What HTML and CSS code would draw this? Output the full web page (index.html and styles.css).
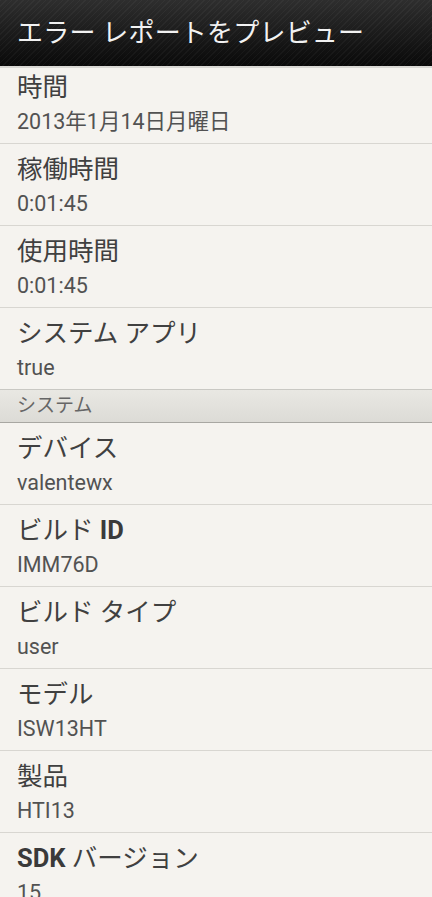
FILE: index.html
```html
<!DOCTYPE html>
<html lang="ja">
<head>
  <meta charset="UTF-8" />
  <meta name="viewport" content="width=device-width, initial-scale=1.0" />
  <title>エラー レポートをプレビュー</title>
  <link rel="stylesheet" href="styles.css">
</head>
<body>
  <div class="action-bar">
    <h1>エラー レポートをプレビュー</h1>
  </div>
  <div class="report-list">
    <div class="report-item first">
      <div class="item-title">時間</div>
      <div class="item-value">2013年1月14日月曜日</div>
    </div>
    <div class="report-item">
      <div class="item-title">稼働時間</div>
      <div class="item-value">0:01:45</div>
    </div>
    <div class="report-item">
      <div class="item-title">使用時間</div>
      <div class="item-value">0:01:45</div>
    </div>
    <div class="report-item">
      <div class="item-title">システム アプリ</div>
      <div class="item-value">true</div>
    </div>
    <div class="section-header">システム</div>
    <div class="report-item">
      <div class="item-title">デバイス</div>
      <div class="item-value">valentewx</div>
    </div>
    <div class="report-item">
      <div class="item-title">ビルド <b>ID</b></div>
      <div class="item-value">IMM76D</div>
    </div>
    <div class="report-item">
      <div class="item-title">ビルド タイプ</div>
      <div class="item-value">user</div>
    </div>
    <div class="report-item">
      <div class="item-title">モデル</div>
      <div class="item-value">ISW13HT</div>
    </div>
    <div class="report-item">
      <div class="item-title">製品</div>
      <div class="item-value">HTI13</div>
    </div>
    <div class="report-item">
      <div class="item-title"><b>SDK</b> バージョン</div>
      <div class="item-value">15</div>
    </div>
  </div>
</body>
</html>
```

FILE: styles.css
```css
body {
  font-family: Roboto, "Noto Sans CJK JP", sans-serif;
  background-color: #f5f3ef;
  color: #444;
  margin: 0;
  padding: 0;
  height: 897px;
  overflow: hidden;
}

.action-bar {
  height: 68px;
  box-sizing: border-box;
  padding: 0 17px;
  display: flex;
  align-items: center;
  background:
    repeating-linear-gradient(135deg, rgba(255,255,255,0.035) 0 1px, transparent 1px 4px),
    linear-gradient(#2e2e2e, #141414 70%, #0a0a0a);
  border-bottom: 2px solid #d9d8d4;
}

.action-bar h1 {
  margin: 0 0 6px;
  font-size: 26px;
  font-weight: normal;
  color: #f2f2f2;
  letter-spacing: 0.2px;
}

.report-item {
  padding: 10px 17px 7px;
  border-bottom: 1px solid #d8d6d1;
}

.report-item.first {
  padding-top: 4px;
}

.item-title {
  font-size: 25.5px;
  line-height: 30px;
  color: #404040;
}

.item-title b {
  font-weight: bold;
  color: #3a3a3a;
}

.item-value {
  font-size: 21.5px;
  line-height: 28px;
  margin-top: 6px;
  color: #525252;
}

.section-header {
  height: 32px;
  line-height: 32px;
  padding: 0 17px;
  font-size: 19px;
  color: #666;
  background: linear-gradient(#e9e8e3, #dcdbd6);
  border-top: 1px solid #c9c8c3;
  border-bottom: 1px solid #a8a7a2;
  margin-top: -1px;
}
```
